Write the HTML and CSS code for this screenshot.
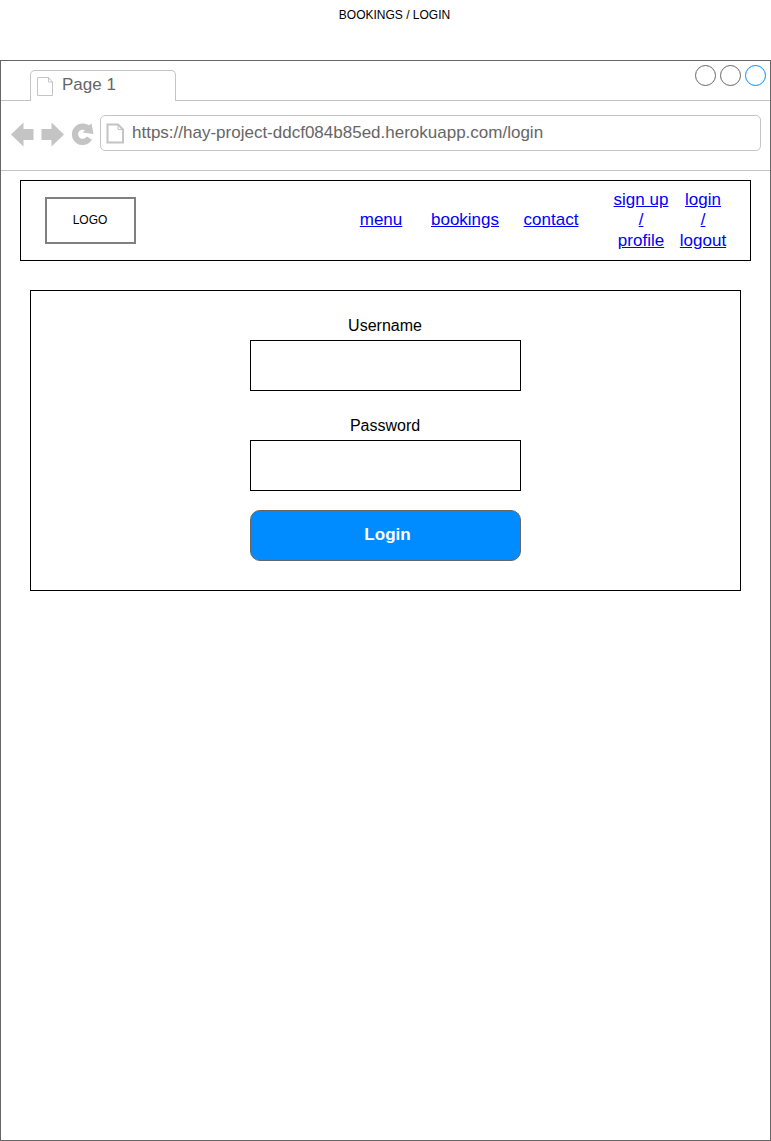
FILE: index.html
```html
<!DOCTYPE html>
<html lang="en">
<head>
<meta charset="utf-8">
<title>Bookings / Login</title>
<link rel="stylesheet" href="styles.css">
</head>
<body>
<h1 class="caption">BOOKINGS / LOGIN</h1>
<div class="window">
  <div class="tabbar">
    <div class="tab">
      <svg class="tab-icon" width="17" height="20" viewBox="0 0 17 20"><path d="M.5 .5H11.5L15.500 5V18.5H.5ZM11.5 .5V5H15.500" fill="none" stroke="#c4c4c4"/></svg>
      <span>Page 1</span>
    </div>
    <svg class="controls" width="73" height="23" viewBox="0 0 73 23" fill="none"><circle cx="11.5" cy="11.5" r="10" stroke="#666"/><circle cx="36.5" cy="11.5" r="10" stroke="#666"/><circle cx="61.5" cy="11.5" r="10" stroke="#008cff"/></svg>
  </div>
  <div class="toolbar">
    <svg class="nav-icons" width="84" height="26" viewBox="0 0 84 26"><g fill="#c4c4c4"><path d="M0 13.5L12.5 1.5V8H22.500V19H12.500V25.500Z"/><path d="M53 13.500L40.500 1.500V8H30.500V19H40.500V25.500Z"/><path d="M80.500 2.500L82.500 13L71.500 11.500L75 8.500L77 5Z"/></g><path d="M77.500 8.200A7.700 7.700 0 1 0 78.300 17.200" fill="none" stroke="#c4c4c4" stroke-width="6.200"/></svg>
    <div class="address">
      <svg width="19" height="22" viewBox="0 0 19 22" fill="none" stroke="#c4c4c4"><path d="M1.500 1.500H12L17 6.500V19.500H1.500Z" stroke-width="2"/><path d="M12 1.500V6.500H17"/></svg>
      <span>https://hay-project-ddcf084b85ed.herokuapp.com/login</span>
    </div>
  </div>
  <header class="site-header">
    <div class="logo">LOGO</div>
    <nav class="nav">
      <a href="#">menu</a>
      <a href="#">bookings</a>
      <a href="#">contact</a>
      <a class="account" href="#">sign up<br>/<br>profile</a>
      <a class="account" href="#">login<br>/<br>logout</a>
    </nav>
  </header>
  <form class="login">
    <label for="user">Username</label>
    <input id="user" type="text">
    <label for="pass">Password</label>
    <input id="pass" type="password">
    <button type="button">Login</button>
  </form>
</div>
</body>
</html>
```
FILE: styles.css
```css
* { box-sizing: border-box; }
body {
  margin: 0;
  height: 1141px;
  background: #fff;
  color: #000;
  font-family: "Liberation Sans", Arial, sans-serif;
}
.caption {
  margin: 0;
  height: 60px;
  padding: 8px 0 0 18px;
  font-size: 12px;
  font-weight: 400;
  line-height: 14px;
  text-align: center;
}
.window {
  height: 1081px;
  border: 1px solid #666;
}
.tabbar {
  display: flex;
  justify-content: space-between;
  height: 40px;
  padding: 3px 3px 0 29px;
  border-bottom: 1px solid #c4c4c4;
}
.tab {
  display: flex;
  width: 146px;
  height: 31px;
  margin-top: 6px;
  padding-left: 6px;
  border: 1px solid #c4c4c4;
  border-bottom: 0;
  border-radius: 5px 5px 0 0;
  background: #fff;
  color: #666;
  font-size: 17px;
  line-height: 27px;
}
.tab-icon { margin: 6px 8px 0 0; }
.toolbar {
  display: flex;
  height: 70px;
  padding: 14px 9px 0 10px;
  border-bottom: 1px solid #c4c4c4;
}
.nav-icons { margin: 6px 5px 0 0; }
.address {
  display: flex;
  flex: 1;
  height: 36px;
  padding-left: 5px;
  border: 1px solid #c4c4c4;
  border-radius: 5px;
  color: #666;
  font-size: 17px;
  line-height: 33px;
}
.address svg { margin: 7px 7px 0 0; }
.site-header {
  display: flex;
  justify-content: space-between;
  width: 731px;
  height: 81px;
  margin: 9px 0 0 19px;
  padding: 0 16px 0 24px;
  border: 1px solid #000;
}
.logo {
  width: 91px;
  height: 47px;
  margin-top: 16px;
  padding-right: 1px;
  border: 2px solid #808080;
  font-size: 12px;
  line-height: 42px;
  text-align: center;
}
.nav {
  display: grid;
  grid-template-columns: 84px 84px 103px 62px 62px;
  align-items: center;
  height: 78px;
  font-size: 17px;
  line-height: 20.4px;
  text-align: center;
}
.nav a { color: #00f; }
.nav a:nth-child(3) { padding-right: 15px; }
.nav .account { padding-top: 1px; }
.login {
  display: flex;
  flex-direction: column;
  align-items: center;
  width: 711px;
  height: 301px;
  margin: 29px 0 0 29px;
  padding-top: 19px;
  border: 1px solid #000;
}
.login label {
  height: 30px;
  padding-right: 1px;
  font-size: 16px;
  line-height: 32px;
}
.login input {
  width: 271px;
  height: 51px;
  margin: 0 0 19px;
  padding: 0 10px;
  border: 1px solid #000;
  border-radius: 0;
  font: 16px "Liberation Sans", Arial, sans-serif;
}
.login button {
  width: 271px;
  height: 51px;
  padding: 0 0 2px 4px;
  border: 1px solid #666;
  border-radius: 10px;
  background: #008cff;
  color: #fff;
  font: bold 17px "Liberation Sans", Arial, sans-serif;
}
```
